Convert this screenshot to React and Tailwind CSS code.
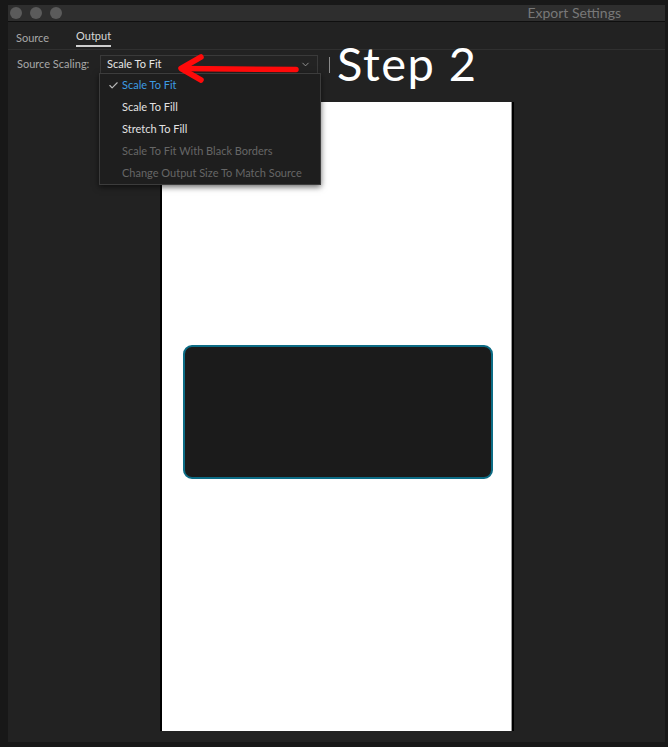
import React from "react"
import { Check, ChevronDown } from "lucide-react"

const ui = { fontFamily: "Lato, 'Noto Sans', sans-serif" }

const options = [
  { label: "Scale To Fit", selected: true },
  { label: "Scale To Fill" },
  { label: "Stretch To Fill" },
  { label: "Scale To Fit With Black Borders", disabled: true },
  { label: "Change Output Size To Match Source", disabled: true },
]

function RedArrow() {
  return (
    <svg className="absolute left-[168px] top-[47px] pointer-events-none" width="130" height="34" viewBox="0 0 130 34">
      <g stroke="#ff0a0a" strokeWidth="5.5" strokeLinecap="round" strokeLinejoin="round" fill="none">
        <path d="M6 16.5 L120 17.5" />
        <path d="M25 5 L5 16.5 L25 28" />
      </g>
    </svg>
  )
}

export default function App() {
  return (
    <div className="w-[668px] h-[747px] bg-[#181818] pl-[8px] pr-[3px] pt-[5px] pb-[5px] overflow-hidden" style={ui}>
      <div className="relative h-full bg-[#222222] flex flex-col">
        {/* Title bar */}
        <div className="h-[17px] bg-[#2e2e2e] border-b border-[#0f0f0f] flex items-center pl-[2px] pr-[44px] shrink-0">
          <div className="flex gap-[8px]">
            <span className="w-[12px] h-[12px] rounded-full bg-[#5b5b5b]" />
            <span className="w-[12px] h-[12px] rounded-full bg-[#5b5b5b]" />
            <span className="w-[12px] h-[12px] rounded-full bg-[#5b5b5b]" />
          </div>
          <span className="ml-auto text-[14px] text-[#787878] leading-none">Export Settings</span>
        </div>

        {/* Tabs */}
        <div className="h-[28px] border-b border-[#303030] flex items-end gap-[27px] px-[8px] shrink-0">
          <span className="text-[11px] text-[#a8a8a8] pb-[3px]">Source</span>
          <span className="text-[11px] text-[#d8d8d8] pb-[1px] mb-[2px] border-b-2 border-[#cfcfcf]">Output</span>
        </div>

        {/* Source scaling row */}
        <div className="flex items-center h-[25px] px-[9px] mt-[2px] shrink-0">
          <span className="text-[11px] text-[#a8a8a8] w-[83px]">Source Scaling:</span>
          <div className="w-[218px] h-[20px] border border-[#3a3a3a] bg-[#232323] flex items-center px-[6px]">
            <span className="text-[11px] text-[#e6e6e6]">Scale To Fit</span>
            <ChevronDown className="ml-auto text-[#9a9a9a]" size={11} strokeWidth={2} />
          </div>
          <span className="ml-[11px] w-px h-[16px] bg-[#8a8a8a]" />
          <span className="ml-[7px] text-[47px] leading-none text-white tracking-[1.5px] -mt-[2px]" style={{ fontFamily: "Lato, sans-serif" }}>Step 2</span>
        </div>

        {/* Preview */}
        <div className="mt-[25px] flex justify-center">
          <div className="bg-black pl-[2px] pr-[2px] ml-[1px]">
            <div className="w-[350px] h-[629px] bg-white border-r border-[#9a9a9a] flex items-center justify-center pb-[9px]">
              <div className="w-[310px] h-[134px] bg-[#1b1b1b] border-2 border-[#0c6c85] rounded-[9px] ml-[2px]" />
            </div>
          </div>
        </div>

        {/* Dropdown menu */}
        <div className="absolute left-[91px] top-[68px] w-[222px] bg-[#1e1e1e] border border-[#3c3c3c] shadow-[0_2px_6px_rgba(0,0,0,0.6)]">
          {options.map((o) => (
            <div key={o.label} className="h-[22px] flex items-center">
              <span className="w-[22px] flex justify-end pr-[3px]">
                {o.selected && <Check size={11} strokeWidth={2.5} className="text-[#b8b8b8]" />}
              </span>
              <span className={`text-[11px] ${o.selected ? "text-[#3d9be3]" : o.disabled ? "text-[#666666]" : "text-[#e2e2e2]"}`}>
                {o.label}
              </span>
            </div>
          ))}
        </div>

        <RedArrow />
      </div>
    </div>
  )
}
